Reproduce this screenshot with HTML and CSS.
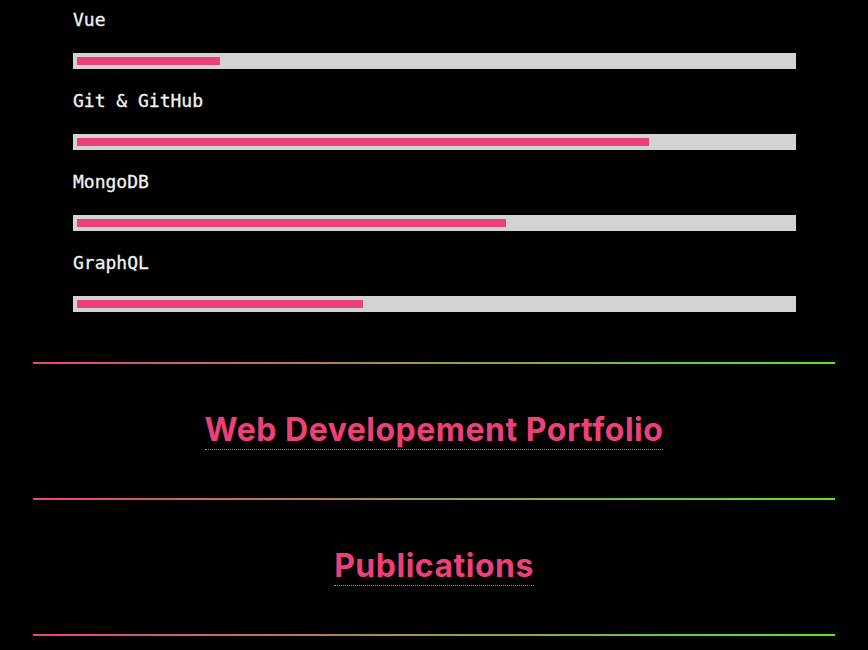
FILE: index.html
```html
<!DOCTYPE html>
<html lang="en">
<head>
<meta charset="utf-8">
<title>Portfolio</title>
<link rel="stylesheet" href="styles.css">
</head>
<body>
<main class="page">
  <section class="skills">
    <div class="skill">
      <div class="skill-name">Vue</div>
      <div class="bar"><div class="fill" style="width:20%"></div></div>
    </div>
    <div class="skill">
      <div class="skill-name">Git &amp; GitHub</div>
      <div class="bar"><div class="fill" style="width:80%"></div></div>
    </div>
    <div class="skill">
      <div class="skill-name">MongoDB</div>
      <div class="bar"><div class="fill" style="width:60%"></div></div>
    </div>
    <div class="skill">
      <div class="skill-name">GraphQL</div>
      <div class="bar"><div class="fill" style="width:40%"></div></div>
    </div>
  </section>
  <hr class="divider">
  <section class="block">
    <h2 class="block-title"><span>Web Developement Portfolio</span></h2>
  </section>
  <hr class="divider">
  <section class="block">
    <h2 class="block-title"><span>Publications</span></h2>
  </section>
  <hr class="divider">
  <section class="block"></section>
</main>
</body>
</html>
```
FILE: styles.css
```css
html, body {
  margin: 0;
  padding: 0;
  background: #000;
}

.page {
  padding: 0 33px;
}

.skills {
  padding: 8px 39px 30px 40px;
}

.skill {
  margin-bottom: 20px;
}

.skill-name {
  font-family: "DejaVu Sans Mono", "Liberation Mono", monospace;
  font-size: 18px;
  line-height: 24px;
  color: #f2f2f2;
  margin-bottom: 21px;
  -webkit-text-stroke: 0.3px #f2f2f2;
}

.bar {
  height: 16px;
  padding: 4px;
  box-sizing: border-box;
  background: #d3d3d3;
}

.fill {
  height: 8px;
  background: #ec407a;
}

.divider {
  height: 2px;
  border: 0;
  margin: 0;
  background: linear-gradient(to right, #ec407a, #4cec28);
}

.block {
  padding: 50px 0 48px;
  text-align: center;
}

.block-title {
  margin: 0;
  font-family: Inter, "Open Sans", sans-serif;
  font-weight: 700;
  font-size: 32px;
  line-height: 1;
  letter-spacing: 0.5px;
  color: #ec407a;
}

.block-title span {
  display: inline-block;
  padding-bottom: 3px;
  border-bottom: 1px dotted #d07a62;
}
```
